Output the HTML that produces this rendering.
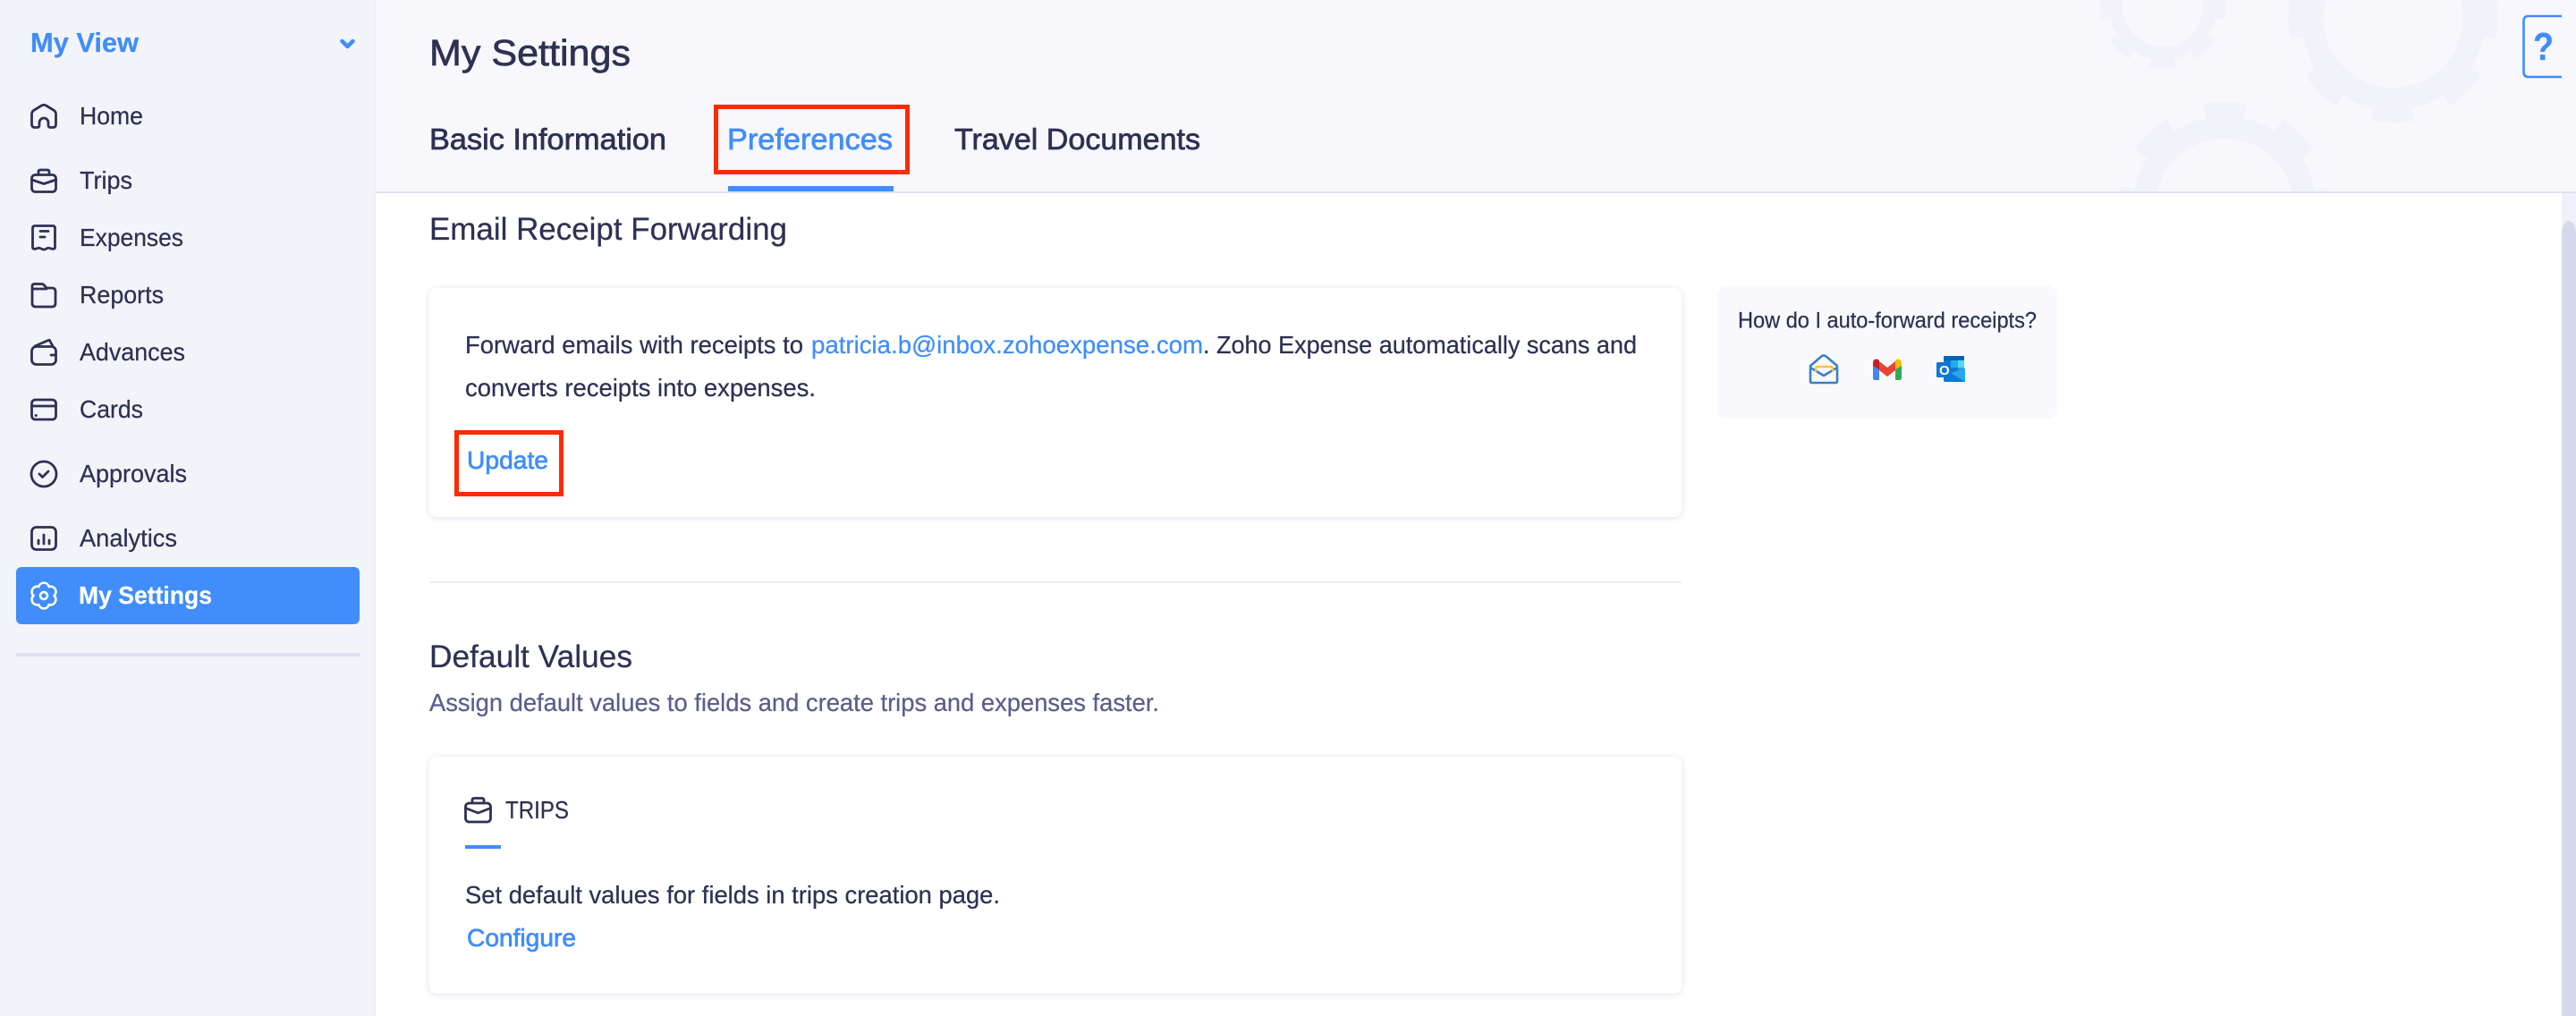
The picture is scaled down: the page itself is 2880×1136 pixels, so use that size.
<!DOCTYPE html>
<html lang="en"><head><meta charset="utf-8"><title>My Settings</title>
<style>
html,body{margin:0;padding:0;width:2880px;height:1136px;overflow:hidden;background:#fff}
body{position:relative;font-family:"Liberation Sans",sans-serif}
.card{position:absolute;left:480px;width:1400px;background:#fff;border-radius:8px;box-shadow:0 1px 7px rgba(70,80,150,.17)}
svg{position:absolute;left:0;top:0}
text{font-family:"Liberation Sans",sans-serif;fill:#2d3153;font-size:28px;stroke:#2d3153;stroke-width:.25px}
.b{fill:#408dfb;stroke:#408dfb}
.m{stroke:#2d3153;stroke-width:.7px}
.bm{fill:#408dfb;stroke:#408dfb;stroke-width:.7px}
.i{fill:none;stroke:#2d3153;stroke-width:2.8;stroke-linecap:round;stroke-linejoin:round}
</style></head>
<body>
<div class="card" style="top:322px;height:256px"></div>
<div class="card" style="top:846px;height:265px"></div>
<svg width="2880" height="1136" viewBox="0 0 2880 1136" xmlns="http://www.w3.org/2000/svg">
<defs><clipPath id="hc"><rect x="420" y="0" width="2460" height="214"/></clipPath></defs>

<!-- sidebar -->
<rect x="0" y="0" width="420" height="1136" fill="#f3f4fa"/>
<rect x="418" y="0" width="2" height="1136" fill="#eeeff8"/>

<!-- header -->
<rect x="420" y="0" width="2460" height="214" fill="#f7f7fc"/>
<g clip-path="url(#hc)" fill="none" stroke="#f2f3fa">
  <circle cx="2418" cy="7" r="52.5" stroke-width="15"/>
  <circle cx="2418" cy="7" r="65" stroke-width="10" stroke-dasharray="28 23" stroke-dashoffset="14"/>
  <circle cx="2675.5" cy="20" r="90.5" stroke-width="25"/>
  <circle cx="2675.5" cy="20" r="110" stroke-width="14" stroke-dasharray="46 40.4" stroke-dashoffset="23"/>
  <circle cx="2487" cy="233" r="90.5" stroke-width="25"/>
  <circle cx="2487" cy="233" r="111" stroke-width="16" stroke-dasharray="46 41.2" stroke-dashoffset="23"/>
</g>
<rect x="420" y="214" width="2460" height="2" fill="#e0e1f3"/>

<!-- scrollbar -->
<rect x="2864" y="216" width="16" height="920" fill="#eef1fa"/>
<path d="M2864 262a8 15 0 0 1 16 0V1136H2864Z" fill="#d5daea"/>

<!-- sidebar header -->
<text x="34" y="58" font-weight="700" class="b" style="font-size:31px" textLength="121" lengthAdjust="spacingAndGlyphs">My View</text>
<path d="M382.5 46L388.5 52L394.5 46" fill="none" stroke="#408dfb" stroke-width="4.5" stroke-linecap="round" stroke-linejoin="round"/>

<!-- nav icons -->
<path class="i" d="M35.5 138V128Q35.5 125 37.5 123.5L46.5 118Q49 116.8 51.5 118L60.5 123.5Q62.5 125 62.5 128V139Q62.5 142.5 59 142.5H56.5Q54 142.5 54 140V137A5 5 0 0 0 44 137V140Q44 142.5 41.5 142.5H39Q35.5 142.5 35.5 139Z"/>
<g class="i"><rect x="35.5" y="195.5" width="27" height="19" rx="4"/><path d="M43 195V192Q43 190 45 190H53Q55 190 55 192V195M35.5 201L49 205.5L62.5 201"/></g>
<path class="i" d="M36.5 277V255Q36.5 252.5 39 252.5H59Q61.5 252.5 61.5 255V277Q61 279 57 278Q54 276.5 52 278Q49 280 46 278Q43 276.5 41 278Q37 279 36.5 277ZM45 258.5H54M45 265H50"/>
<path class="i" d="M36 322V320Q36 317.5 38.5 317.5H46.5Q48.5 317.5 49.5 319L52 322H58Q62 322 62 326V339Q62 343 58 343H40Q36 343 36 339ZM36 323H52"/>
<g class="i"><rect x="35.5" y="387.5" width="27" height="20" rx="5"/><path d="M39 387L54 380.5Q55.5 380 56 381.5L59 387M57 397H62"/></g>
<g class="i"><rect x="35.5" y="447" width="27" height="22" rx="4"/><path d="M35.5 454H62.5M40 464.5H40.5"/></g>
<g class="i"><circle cx="49" cy="530" r="14"/><path d="M44 530L47.5 533.5L54 527"/></g>
<g class="i"><rect x="35.5" y="589.5" width="27" height="25" rx="5"/><path d="M43 604V608M49 598V608M55 604V608"/></g>

<!-- nav text -->
<text x="89" y="139" textLength="71" lengthAdjust="spacingAndGlyphs">Home</text>
<text x="89" y="211" textLength="59" lengthAdjust="spacingAndGlyphs">Trips</text>
<text x="89" y="275" textLength="116" lengthAdjust="spacingAndGlyphs">Expenses</text>
<text x="89" y="339" textLength="94" lengthAdjust="spacingAndGlyphs">Reports</text>
<text x="89" y="403" textLength="118" lengthAdjust="spacingAndGlyphs">Advances</text>
<text x="89" y="467" textLength="71" lengthAdjust="spacingAndGlyphs">Cards</text>
<text x="89" y="539" textLength="120" lengthAdjust="spacingAndGlyphs">Approvals</text>
<text x="89" y="611" textLength="109" lengthAdjust="spacingAndGlyphs">Analytics</text>

<rect x="18" y="634" width="384" height="64" rx="6" fill="#408dfb"/>
<path d="M54.7 656A5.9 5.9 0 0 1 60.5 666A5.9 5.9 0 0 1 54.7 676A5.9 5.9 0 0 1 43.3 676A5.9 5.9 0 0 1 37.5 666A5.9 5.9 0 0 1 43.3 656A5.9 5.9 0 0 1 54.7 656Z" fill="none" stroke="#fff" stroke-width="2.6" stroke-linejoin="round"/>
<circle cx="49" cy="666" r="4" fill="none" stroke="#fff" stroke-width="2.6"/>
<text x="88" y="675" font-weight="700" style="fill:#fff;stroke:#fff" textLength="149" lengthAdjust="spacingAndGlyphs">My Settings</text>
<rect x="18" y="730" width="384" height="4" fill="#e0e0f0"/>

<!-- page title and tabs -->
<text x="480" y="73" style="font-size:41px" class="m" textLength="225" lengthAdjust="spacingAndGlyphs">My Settings</text>
<text x="480" y="167" style="font-size:33px" class="m" textLength="265" lengthAdjust="spacingAndGlyphs">Basic Information</text>
<text x="813" y="167" style="font-size:33px" class="bm" textLength="185" lengthAdjust="spacingAndGlyphs">Preferences</text>
<text x="1067" y="167" style="font-size:33px" class="m" textLength="275" lengthAdjust="spacingAndGlyphs">Travel Documents</text>
<rect x="800.5" y="119.5" width="214" height="73" fill="none" stroke="#ff2a00" stroke-width="5"/>
<rect x="814" y="208" width="185" height="6" fill="#408dfb"/>

<!-- email section -->
<text x="480" y="268" style="font-size:35px" textLength="400" lengthAdjust="spacingAndGlyphs">Email Receipt Forwarding</text>
<text x="520" y="395" textLength="378" lengthAdjust="spacingAndGlyphs">Forward emails with receipts to</text>
<text x="907" y="395" class="b" textLength="438" lengthAdjust="spacingAndGlyphs">patricia.b@inbox.zohoexpense.com</text>
<text x="1345" y="395" textLength="485" lengthAdjust="spacingAndGlyphs">. Zoho Expense automatically scans and</text>
<text x="520" y="443" textLength="392" lengthAdjust="spacingAndGlyphs">converts receipts into expenses.</text>
<text x="522" y="524" class="bm" textLength="91" lengthAdjust="spacingAndGlyphs">Update</text>
<rect x="510.5" y="483.5" width="117" height="69" fill="none" stroke="#ff2a00" stroke-width="5"/>

<rect x="480" y="650" width="1400" height="2" fill="#eeeef8"/>

<!-- default values -->
<text x="480" y="746" style="font-size:35px" textLength="227" lengthAdjust="spacingAndGlyphs">Default Values</text>
<text x="480" y="795" style="fill:#5a5e8c;stroke:#5a5e8c" textLength="816" lengthAdjust="spacingAndGlyphs">Assign default values to fields and create trips and expenses faster.</text>

<g class="i" transform="translate(-15 -298)"><rect x="535.5" y="1196" width="28" height="21" rx="4"/><path d="M543 1196V1192.5Q543 1190.5 545 1190.5H554Q556 1190.5 556 1192.5V1196M535.5 1201.5L549.5 1207L563.5 1201.5"/></g>
<text x="565" y="915" textLength="71" lengthAdjust="spacingAndGlyphs">TRIPS</text>
<rect x="520" y="945" width="40" height="4" fill="#408dfb"/>
<text x="520" y="1010" textLength="598" lengthAdjust="spacingAndGlyphs">Set default values for fields in trips creation page.</text>
<text x="522" y="1058" class="bm" textLength="122" lengthAdjust="spacingAndGlyphs">Configure</text>

<!-- help box -->
<rect x="1920" y="320" width="380" height="148" rx="10" fill="#f9f9fd"/>
<text x="1943" y="366.5" style="font-size:25px" textLength="334" lengthAdjust="spacingAndGlyphs">How do I auto-forward receipts?</text>

<!-- zoho mail -->
<path d="M2024 409V411L2039 420L2054 411V409L2041 398Q2039 396.8 2037 398ZM2024 412V426Q2024 428 2026 428H2052Q2054 428 2054 426V412" fill="none" stroke="#3a80c4" stroke-width="2.6" stroke-linejoin="round"/>
<path d="M2030 416V412Q2030 410 2032 410H2047Q2049 410 2049 412V415" fill="none" stroke="#f9c33c" stroke-width="2.4"/>

<!-- gmail -->
<path d="M2094 409H2101V425H2096.5Q2094 425 2094 422.5Z" fill="#4285f4"/>
<path d="M2119 409H2126V422.5Q2126 425 2123.5 425H2119Z" fill="#34a853"/>
<path d="M2101 404L2110 411L2119 404V414L2110 421L2101 414Z" fill="#ea4335"/>
<path d="M2094 409V406Q2094 401 2099 401.5L2101 403V413Z" fill="#c5221f"/>
<path d="M2126 409V406Q2126 401 2121 401.5L2119 403V413Z" fill="#fbbc04"/>

<!-- outlook -->
<rect x="2173" y="398" width="23" height="5" rx="1" fill="#0364b8"/>
<rect x="2173" y="403" width="8" height="8" fill="#0f78d4"/>
<rect x="2181" y="403" width="8" height="8" fill="#28a8ea"/>
<rect x="2189" y="403" width="7" height="8" fill="#50d9ff"/>
<rect x="2173" y="411" width="8" height="8" fill="#0364b8"/>
<rect x="2181" y="411" width="8" height="8" fill="#0f78d4"/>
<rect x="2189" y="411" width="7" height="8" fill="#28a8ea"/>
<path d="M2173 417L2197 412V427H2175Q2173 427 2173 425Z" fill="#0f78d4"/>
<path d="M2181 417L2197 427V412Z" fill="#28a8ea"/>
<rect x="2165" y="405" width="16" height="17" rx="1.5" fill="#0f78d4"/>
<text x="2168" y="419" style="font-size:15px;fill:#fff;stroke:none" font-weight="700">O</text>

<!-- help tab -->
<path d="M2864 18H2827Q2821.5 18 2821.5 23.5V80.5Q2821.5 86 2827 86H2864" fill="none" stroke="#408dfb" stroke-width="2.6"/>
<text x="2832" y="67" font-weight="700" class="b" style="font-size:44px" textLength="23" lengthAdjust="spacingAndGlyphs">?</text>
</svg>
</body></html>
